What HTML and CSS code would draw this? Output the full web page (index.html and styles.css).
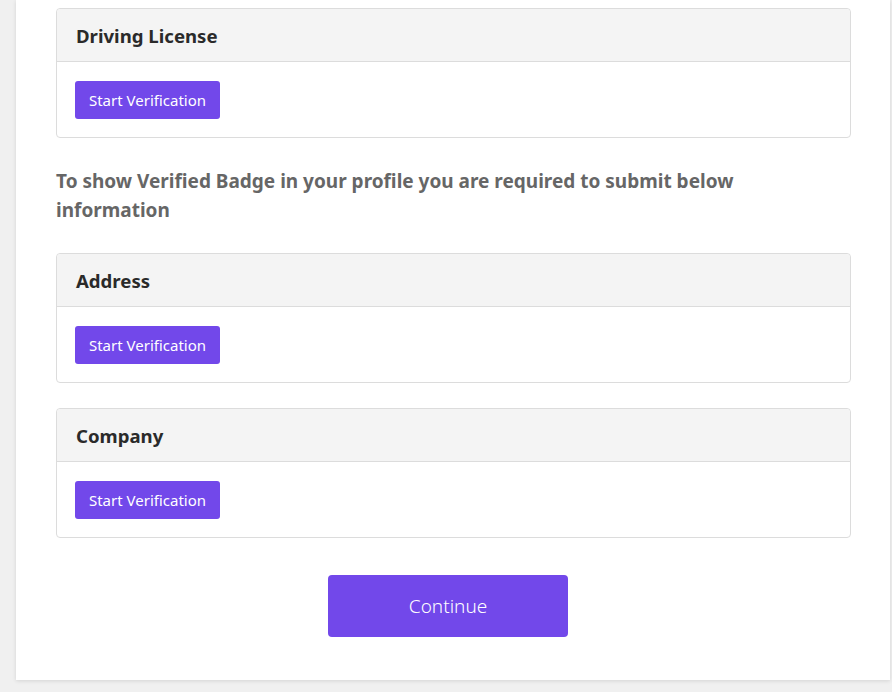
FILE: index.html
```html
<!DOCTYPE html>
<html lang="en">
<head>
<meta charset="utf-8">
<link rel="stylesheet" href="styles.css">
</head>
<body>
<div class="panel">
  <div class="card">
    <div class="card-header">Driving License</div>
    <div class="card-body"><button class="btn">Start Verification</button></div>
  </div>
  <p class="note">To show Verified Badge in your profile you are required to submit below information</p>
  <div class="card">
    <div class="card-header">Address</div>
    <div class="card-body"><button class="btn">Start Verification</button></div>
  </div>
  <div class="card card-gap">
    <div class="card-header">Company</div>
    <div class="card-body"><button class="btn">Start Verification</button></div>
  </div>
  <div class="actions"><button class="btn-continue">Continue</button></div>
</div>
</body>
</html>
```

FILE: styles.css
```css
html, body {
  margin: 0;
  padding: 0;
  background: #f0f0f0;
  font-family: "Noto Sans", "Open Sans", sans-serif;
}
.panel {
  margin: 0 2px 12px 16px;
  background: #fff;
  padding: 8px 39px 43px 40px;
  box-shadow: 0 1px 4px rgba(0,0,0,0.12);
}
.card {
  border: 1px solid #dcdcdc;
  border-radius: 4px;
  background: #fff;
}
.card-gap { margin-top: 25px; }
.card-header {
  background: #f4f4f4;
  border-bottom: 1px solid #dcdcdc;
  border-radius: 4px 4px 0 0;
  height: 53px;
  box-sizing: border-box;
  padding: 1px 19px 0;
  display: flex;
  align-items: center;
  font-size: 18.6px;
  font-weight: 700;
  color: #2a2a2a;
}
.card-body {
  padding: 19px 18px 18px;
  display: flex;
}
.btn {
  background: #7248ea;
  color: #fff;
  border: none;
  border-radius: 3px;
  height: 38px;
  width: 145px;
  padding: 0;
  font-family: inherit;
  font-size: 15px;
}
.note {
  margin: 29px 0 28px;
  padding-right: 40px;
  font-size: 19px;
  line-height: 29px;
  font-weight: 700;
  color: #666;
}
.actions {
  display: flex;
  justify-content: center;
  margin-top: 37px;
  padding-right: 11px;
}
.btn-continue {
  background: #7248ea;
  color: #fff;
  border: none;
  border-radius: 4px;
  width: 240px;
  height: 62px;
  font-family: inherit;
  font-size: 19px;
  font-weight: 300;
}
```
